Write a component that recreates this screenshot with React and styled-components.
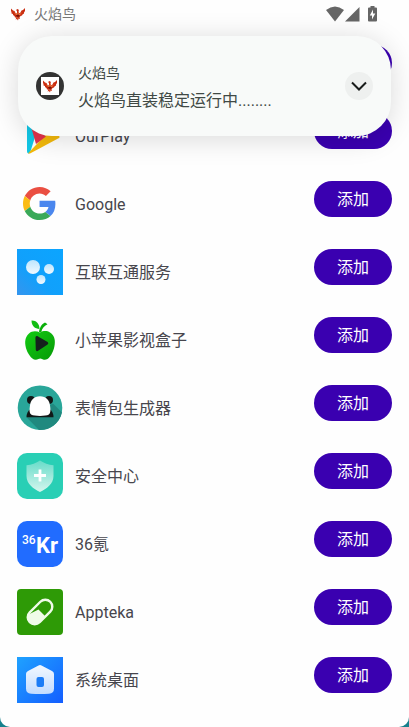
import styled, { createGlobalStyle } from "styled-components"

const GlobalStyle = createGlobalStyle`
    * {
        box-sizing: border-box;
    }

    body {
        margin: 0;
        background: #16808c;
        font-family: Roboto, "Noto Sans CJK SC", sans-serif;
    }
`

const Screen = styled.div`
    position: relative;
    min-height: 100vh;
    overflow: hidden;
    background: #fefefe;
    border-radius: 0 0 10px 10px;
`

const StatusBar = styled.header`
    display: flex;
    align-items: center;
    justify-content: space-between;
    height: 28px;
    padding: 0 31px 0 10px;
    color: #777;
    font-size: 14px;
    line-height: 20px;
`

const StatusGroup = styled.div`
    display: flex;
    align-items: center;
    gap: 8px;
`

const Signals = styled.svg`
    display: block;
    width: 52px;
    height: 16px;
    fill: #666;
`

const Notification = styled.section`
    position: absolute;
    top: 36px;
    left: 18px;
    right: 18px;
    display: flex;
    align-items: center;
    height: 100px;
    padding: 0 18px;
    border-radius: 34px;
    background: #f8faf9;
    box-shadow: 0 3px 28px rgba(0, 0, 0, 0.15);
`

const Avatar = styled.div`
    display: flex;
    align-items: center;
    justify-content: center;
    width: 28px;
    height: 28px;
    border-radius: 50%;
    background: #333;
`

const AvatarTile = styled.div`
    display: flex;
    align-items: center;
    justify-content: center;
    width: 18px;
    height: 18px;
    background: white;
`

const NotificationText = styled.div`
    flex: 1;
    min-width: 0;
    padding: 2px 0 0 14px;
    color: #404945;

    & .title {
        font-size: 14px;
        line-height: 28px;
    }

    & .message {
        font-size: 16px;
        line-height: 28px;
    }
`

const ExpandButton = styled.button`
    display: flex;
    align-items: center;
    justify-content: center;
    width: 28px;
    height: 28px;
    padding: 0;
    border: none;
    border-radius: 50%;
    background: #eef0ef;
    cursor: pointer;
`

const AppList = styled.ul`
    list-style: none;
    margin: 0;
    padding: 17px 17px 0;
`

const AppRow = styled.li`
    display: flex;
    align-items: flex-start;
    gap: 12px;
    height: 68px;
`

const AppIcon = styled.svg`
    display: block;
    flex: none;
    width: 46px;
    height: 46px;
`

const AppName = styled.span`
    flex: 1;
    min-width: 0;
    color: #47464d;
    font-size: 16px;
    line-height: 48px;
`

const AddButton = styled.button`
    width: 78px;
    height: 36px;
    padding: 2px 0 0;
    border: none;
    border-radius: 18px;
    background: #3a00b0;
    color: white;
    font-family: inherit;
    font-size: 16px;
    font-weight: 400;
    line-height: 34px;
    cursor: pointer;
`

const Phoenix = ({ size }) => (
    <svg width={size} height={size} viewBox="0 0 32 32" aria-hidden="true">
        <path
            d="M2 5 6 9 9 10 11 14 14 15 14 10 12 8 15 6 18 8 17 10 18 15 21 13 23 9 26 8 30 4 30 10 28 13 28 15 25 17 24 19 21 20 19 23 20 26 17 25 16 29 14 26 11 27 13 23 10 23 9 20 6 18 6 16 3 15 3 12 2 10z"
            fill="#c92c10"
        />
        <path
            d="M4 9 8 12 10 16 14 19 14 23 16 26 17 21 20 18 23 14 26 11 21 15 18 17 16 12 15 16 11 15z"
            fill="#f58a45"
        />
        <path d="M11 17 14 18 16 16 18 18 20 18 17 22 16 24 14 21z" fill="#7d0d06" />
    </svg>
)

const OurPlayIcon = () => (
    <>
        <path d="M10 7c0-2 1-3 3-2l5 19-5 16c-2 1-3 0-3-2z" fill="#12c7e6" />
        <path d="M12 5 34 18 26 24z" fill="#19b45b" />
        <path d="M32 18 42 23q1.500 1 0 2L13 40.500h-2z" fill="#f3b90b" />
        <path d="M13 10 29 23.500 19 31z" fill="#e4324c" />
    </>
)

const GoogleIcon = () => (
    <g transform="translate(6 6) scale(.69)">
        <path
            d="M24 9.500c3.540 0 6.710 1.220 9.210 3.600l6.850-6.850C35.900 2.380 30.470 0 24 0 14.620 0 6.510 5.380 2.560 13.220l7.980 6.190C12.430 13.720 17.740 9.500 24 9.500z"
            fill="#ea4f42"
        />
        <path
            d="M46.980 24.550c0-1.570-.15-3.090-.38-4.550H24v9.020h12.940c-.58 2.960-2.260 5.480-4.780 7.180l7.730 6c4.510-4.180 7.090-10.360 7.090-17.650z"
            fill="#4b87ee"
        />
        <path
            d="M10.530 28.590c-.48-1.450-.76-2.990-.76-4.590s.27-3.140.76-4.590l-7.980-6.190C.92 16.460 0 20.120 0 24c0 3.880.92 7.540 2.560 10.780l7.970-6.190z"
            fill="#fbbc14"
        />
        <path
            d="M24 48c6.480 0 11.930-2.130 15.890-5.810l-7.730-6c-2.150 1.450-4.920 2.300-8.160 2.300-6.260 0-11.570-4.220-13.470-9.910l-7.980 6.190C6.510 42.620 14.620 48 24 48z"
            fill="#3aa958"
        />
    </g>
)

const ConnectIcon = () => (
    <>
        <defs>
            <linearGradient id="connectBg" x1="1" y1="0" x2="0" y2="1">
                <stop offset="0" stopColor="#0ba5ff" />
                <stop offset=".6" stopColor="#11a0fb" />
                <stop offset="1" stopColor="#3595ee" />
            </linearGradient>
            <linearGradient id="bubble" x1="0" y1="0" x2="0" y2="1">
                <stop offset="0" stopColor="#bde5fd" />
                <stop offset="1" stopColor="#f0f9ff" />
            </linearGradient>
        </defs>
        <rect width="46" height="46" fill="url(#connectBg)" />
        <circle cx="16" cy="18" r="7" fill="url(#bubble)" />
        <circle cx="32" cy="20" r="5" fill="url(#bubble)" />
        <circle cx="24" cy="30.5" r="4.5" fill="url(#bubble)" />
    </>
)

const AppleIcon = () => (
    <>
        <defs>
            <linearGradient id="apple" x1="0" y1="0" x2="1" y2="1">
                <stop offset="0" stopColor="#12cc12" />
                <stop offset="1" stopColor="#079907" />
            </linearGradient>
        </defs>
        <path
            d="M23 15.500c3-1.700 7-2 10 0 4 2.500 5.500 7 4.700 12-.7 6-3.700 12-7.200 14.500-2 1.200-4.500.8-5.500 0q-1.700-1-3.600 0c-2 1-4.400.8-6-.6C11.500 38.500 8.500 32 8.200 26.500c-.3-5 2-10 6.500-11.800 3-1 5.800-.5 8.300.8z"
            fill="url(#apple)"
        />
        <path d="M22 15c.5-4 2.500-8 6-9.500l2.500 1.800C27 9 25 11.500 24.300 15z" fill="#0aaf0a" />
        <path d="M14.500 3.600c4.500-.3 7.800 2.800 8 8.400-4.700 0-7.800-2.900-8-8.400z" fill="#10bd10" />
        <path
            d="M20.200 19 30.600 25q1.500 1.200 0 2.400L20.800 34q-1.800.6-2-1.200l-.4-12q0-2.200 1.800-1.800z"
            fill="#15211d"
        />
    </>
)

const PandaIcon = () => (
    <>
        <circle cx="23" cy="22.700" r="22.300" fill="#29a699" />
        <path d="M36 18.500 45 27.500a22.300 22.300 0 0 1-23 17.400L9.500 32.300z" fill="#20897f" />
        <circle cx="14" cy="15" r="4" fill="#111817" />
        <circle cx="32" cy="15" r="4" fill="#111817" />
        <path d="M9.500 32.300q0-5.500 4-8.300h19q4 2.800 4 8.300z" fill="#111817" />
        <path
            d="M23 11.300c6.200 0 9.400 4 10 9.200.6 4 1 7.500-1.500 9.300-2.300 1.500-14.700 1.500-17 0-2.500-1.800-2.100-5.300-1.500-9.300.6-5.200 3.800-9.200 10-9.200z"
            fill="#fff"
        />
    </>
)

const SecurityIcon = () => (
    <>
        <defs>
            <linearGradient id="shield" x1="0" y1="0" x2="0" y2="1">
                <stop offset="0" stopColor="#67dcc9" />
                <stop offset="1" stopColor="#d6f6ee" />
            </linearGradient>
        </defs>
        <rect width="46" height="46" rx="10" fill="#29cfb5" />
        <path
            d="M23 7.500q6 4 13.500 4.700V23c0 8-7 12.800-13.500 16-6.500-3.200-13.500-8-13.500-16V12.200Q17 11.500 23 7.500z"
            fill="url(#shield)"
        />
        <path d="M23 16.500v12M17 22.500h12" stroke="#fff" strokeWidth="2.8" />
    </>
)

const KrIcon = () => (
    <>
        <rect width="46" height="46" rx="10" fill="#216cff" />
        <text x="5" y="23" fill="#fff" fontFamily="Roboto" fontSize="12" fontWeight="500">
            36
        </text>
        <text x="19" y="32" fill="#fff" fontFamily="Roboto" fontSize="22" fontWeight="700">
            Kr
        </text>
    </>
)

const ApptekaIcon = () => (
    <>
        <rect width="46" height="46" rx="4" fill="#2e9a06" />
        <rect
            x="16"
            y="8.5"
            width="14"
            height="29"
            rx="7"
            transform="rotate(45 23 23)"
            fill="none"
            stroke="#effbe9"
            strokeWidth="2.4"
        />
        <path d="M11.500 25.500 21.500 20.500 28.500 27.500 22.500 33.500a7 7 0 0 1-10-10z" fill="#effbe9" />
    </>
)

const DesktopIcon = () => (
    <>
        <defs>
            <linearGradient id="desktopBg" x1="0" y1="0" x2="1" y2="1">
                <stop offset="0" stopColor="#1fa2ff" />
                <stop offset="1" stopColor="#145eff" />
            </linearGradient>
            <linearGradient id="house" x1="0" y1="0" x2="0" y2="1">
                <stop offset="0" stopColor="#f2f8ff" />
                <stop offset="1" stopColor="#c3dcff" />
            </linearGradient>
        </defs>
        <rect width="46" height="46" fill="url(#desktopBg)" />
        <path
            d="M21.500 8.500q1.500-.8 3 0L35 14q2 1 2 3v14.500q0 5-5 5.200-9 .7-18 0-5-.2-5-5.200V17q0-2 2-3z"
            fill="url(#house)"
        />
        <rect x="19.5" y="20" width="7.5" height="10" rx="2" fill="#1c7cf6" />
    </>
)

// the first entry is fully covered by the notification
const apps = [
    { name: "", Icon: null },
    { name: "OurPlay", Icon: OurPlayIcon },
    { name: "Google", Icon: GoogleIcon },
    { name: "互联互通服务", Icon: ConnectIcon },
    { name: "小苹果影视盒子", Icon: AppleIcon },
    { name: "表情包生成器", Icon: PandaIcon },
    { name: "安全中心", Icon: SecurityIcon },
    { name: "36氪", Icon: KrIcon },
    { name: "Appteka", Icon: ApptekaIcon },
    { name: "系统桌面", Icon: DesktopIcon },
]

const App = () => {
    return (
        <Screen>
            <GlobalStyle />
            <StatusBar>
                <StatusGroup>
                    <Phoenix size={16} />
                    <span>火焰鸟</span>
                </StatusGroup>
                <Signals viewBox="0 0 52 16" aria-hidden="true">
                    <path d="M0 4Q9-3 18 4L9 15.500z" />
                    <path d="M33.500 1v14.500H19z" />
                    <path d="M44.500 0h4v1.500H50q1 0 1 1v12q0 1-1 1h-7q-1 0-1-1v-12q0-1 1-1h1.500z" />
                    <path d="M47 3.500 43.800 9.500h2.200v4L49.300 7.500H47z" fill="#fff" />
                </Signals>
            </StatusBar>
            <AppList>
                {apps.map(({ name, Icon }, index) => (
                    <AppRow key={index}>
                        <AppIcon viewBox="0 0 46 46" aria-hidden="true">
                            {Icon && <Icon />}
                        </AppIcon>
                        <AppName>{name}</AppName>
                        <AddButton type="button">添加</AddButton>
                    </AppRow>
                ))}
            </AppList>
            <Notification>
                <Avatar>
                    <AvatarTile>
                        <Phoenix size={16} />
                    </AvatarTile>
                </Avatar>
                <NotificationText>
                    <div className="title">火焰鸟</div>
                    <div className="message">火焰鸟直装稳定运行中........</div>
                </NotificationText>
                <ExpandButton type="button" aria-label="展开">
                    <svg width="16" height="10" viewBox="0 0 16 10" aria-hidden="true">
                        <path d="m1 1.500 7 7 7-7" fill="none" stroke="#191c1b" strokeWidth="2" />
                    </svg>
                </ExpandButton>
            </Notification>
        </Screen>
    )
}

export default App
